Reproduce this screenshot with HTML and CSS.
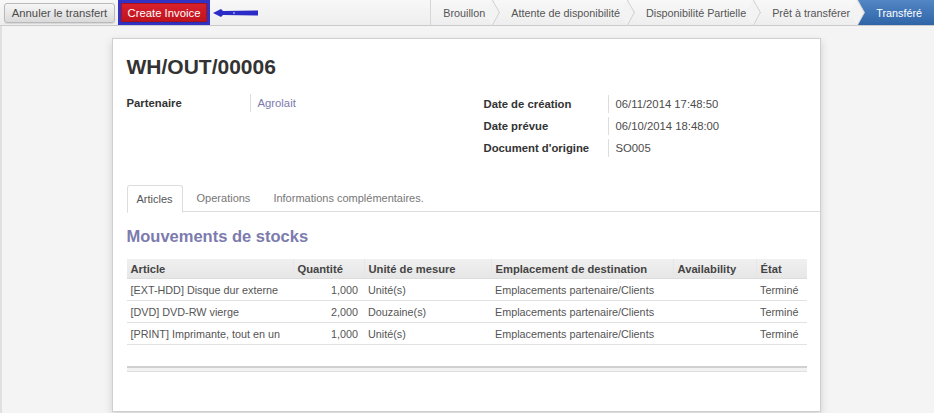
FILE: index.html
```html
<!DOCTYPE html>
<html lang="fr">
<head>
    <meta charset="UTF-8">
    <title>WH/OUT/00006</title>
    <link rel="stylesheet" href="styles.css">
</head>
<body>
    <div class="barre">
        <div class="boutons">
            <button class="btn">Annuler le transfert</button>
            <span class="cadre"><button class="btn rouge">Create Invoice</button></span>
            <svg class="fleche" width="48" height="12" viewBox="0 0 48 12">
                <path d="M1 6 L9 2 L11 4 L46 3.5 L46 8.5 L11 8 L9 10 Z" fill="#2b2bc8"/>
                <circle cx="22" cy="6" r="1" fill="#a0a0ee"/>
            </svg>
        </div>
        <div class="etapes">
            <span class="etape">Brouillon</span>
            <span class="etape">Attente de disponibilité</span>
            <span class="etape">Disponibilité Partielle</span>
            <span class="etape">Prêt à transférer</span>
            <span class="etape active">Transféré</span>
        </div>
    </div>

    <div class="fond">
        <div class="feuille">
            <h1 class="titre">WH/OUT/00006</h1>
            <div class="groupes">
                <div class="groupe gauche">
                    <div class="champ"><span class="libelle">Partenaire</span><span class="valeur lien">Agrolait</span></div>
                </div>
                <div class="groupe droite">
                    <div class="champ"><span class="libelle">Date de création</span><span class="valeur">06/11/2014 17:48:50</span></div>
                    <div class="champ"><span class="libelle">Date prévue</span><span class="valeur">06/10/2014 18:48:00</span></div>
                    <div class="champ"><span class="libelle">Document d'origine</span><span class="valeur">SO005</span></div>
                </div>
            </div>

            <div class="onglets">
                <span class="onglet actif">Articles</span>
                <span class="onglet">Operations</span>
                <span class="onglet">Informations complémentaires.</span>
            </div>

            <h2 class="sous-titre">Mouvements de stocks</h2>

            <table class="liste">
                <thead>
                    <tr>
                        <th class="c1">Article</th>
                        <th class="c2">Quantité</th>
                        <th class="c3">Unité de mesure</th>
                        <th class="c4">Emplacement de destination</th>
                        <th class="c5">Availability</th>
                        <th class="c6">État</th>
                    </tr>
                </thead>
                <tbody>
                    <tr>
                        <td>[EXT-HDD] Disque dur externe</td>
                        <td class="num">1,000</td>
                        <td>Unité(s)</td>
                        <td>Emplacements partenaire/Clients</td>
                        <td></td>
                        <td>Terminé</td>
                    </tr>
                    <tr>
                        <td>[DVD] DVD-RW vierge</td>
                        <td class="num">2,000</td>
                        <td>Douzaine(s)</td>
                        <td>Emplacements partenaire/Clients</td>
                        <td></td>
                        <td>Terminé</td>
                    </tr>
                    <tr>
                        <td>[PRINT] Imprimante, tout en un</td>
                        <td class="num">1,000</td>
                        <td>Unité(s)</td>
                        <td>Emplacements partenaire/Clients</td>
                        <td></td>
                        <td>Terminé</td>
                    </tr>
                </tbody>
            </table>
            <div class="pied"></div>
        </div>
    </div>
</body>
</html>
```

FILE: styles.css
```css
body {
    margin: 0;
    font-family: "Liberation Sans", Arial, sans-serif;
    font-size: 11px;
    color: #4c4c4c;
    background-color: #f4f4f4;
    height: 413px;
    overflow: hidden;
}

.barre {
    display: flex;
    justify-content: space-between;
    align-items: stretch;
    height: 25px;
    background: linear-gradient(#f8f8f8, #eeeeee);
    border-bottom: 1px solid #cacaca;
}

.boutons {
    display: flex;
    align-items: center;
    padding-left: 4px;
}

.btn {
    font-family: "Liberation Sans", Arial, sans-serif;
    font-size: 11.3px;
    height: 20px;
    width: 111px;
    padding: 0;
    color: #4c4c4c;
    border: 1px solid #b9b9b9;
    border-radius: 3px;
    background: linear-gradient(#f6f6f6, #dadada);
    box-shadow: 0 1px 1px rgba(0, 0, 0, 0.1);
}

.cadre {
    display: flex;
    align-items: center;
    height: 25px;
    margin-left: 3px;
    padding: 0 3px;
    background-color: #3232c4;
    box-sizing: border-box;
}

.rouge {
    height: 19px;
    width: 86px;
    color: #fff;
    border: 1px solid #a8121c;
    border-radius: 1px;
    background: linear-gradient(#d8202b, #c0141e);
}

.fleche {
    margin-left: 2px;
}

.etapes {
    display: flex;
    align-items: stretch;
    font-size: 10.8px;
}

.etape {
    position: relative;
    display: flex;
    align-items: center;
    padding: 0 7px 0 19px;
    color: #555;
}

.etape::after {
    content: '';
    position: absolute;
    z-index: 1;
    top: 3.1px;
    right: -9.35px;
    width: 18.7px;
    height: 18.7px;
    box-sizing: border-box;
    background-color: #f3f3f3;
    border-top: 1px solid #c8c8c8;
    border-right: 1px solid #c8c8c8;
    transform: scaleX(0.55) rotate(45deg);
}

.etape:first-child {
    padding-left: 12px;
    border-left: 1px solid #d6d6d6;
}

.etape.active {
    color: #fff;
    padding: 0 12px 0 19px;
    background: linear-gradient(#5286c4, #2f65a8);
}

.etape.active::after {
    display: none;
}

.fond {
    display: flex;
    justify-content: center;
    padding: 12px 0 0 0;
    border-left: 2px solid #e0e0e0;
    height: 400px;
    box-sizing: border-box;
}

.feuille {
    width: 709px;
    height: 374px;
    padding: 5px 14px 0 14px;
    box-sizing: border-box;
    background-color: #fff;
    border: 1px solid #cfcfcf;
    box-shadow: 0 3px 8px rgba(0, 0, 0, 0.15);
    margin-left: -4px;
}

.titre {
    margin: 8px 0 0 0;
    font-size: 21px;
    color: #333;
    line-height: 30px;
}

.groupes {
    display: flex;
    margin-top: 12px;
    font-size: 11.3px;
}

.groupe {
    display: flex;
    flex-direction: column;
    gap: 4px;
}

.gauche {
    width: 357px;
}

.droite {
    margin-top: 1px;
}

.champ {
    display: flex;
    line-height: 18px;
}

.libelle {
    font-weight: bold;
    color: #333;
}

.gauche .libelle {
    width: 123px;
}

.droite .libelle {
    width: 124px;
}

.valeur {
    padding-left: 7px;
    border-left: 1px solid #ddd;
}

.lien {
    color: #7c7bad;
}

.onglets {
    display: flex;
    margin-top: 28px;
    border-bottom: 1px solid #ddd;
    margin-right: -14px;
    height: 26px;
}

.onglet {
    padding: 0 9px;
    line-height: 26px;
    color: #777;
    margin-right: 5px;
}

.onglet.actif {
    color: #555;
    background-color: #fff;
    border: 1px solid #ddd;
    border-bottom-color: #fff;
    border-radius: 3px 3px 0 0;
    height: 26px;
}

.sous-titre {
    margin: 13px 0 0 0;
    font-size: 16.5px;
    line-height: 22px;
    color: #7c7bad;
}

.liste {
    width: 680px;
    margin-top: 12px;
    border-collapse: collapse;
    white-space: nowrap;
}

.liste th {
    text-align: left;
    font-weight: bold;
    font-size: 11.2px;
    color: #444;
    height: 19px;
    padding: 0 4px;
    background: linear-gradient(#f0f0f0, #e6e6e6);
    border-left: 1px solid #e6e6e6;
    border-bottom: 1px solid #ddd;
}

.liste th.c1 { width: 158px; border-left: none; }
.liste th.c2 { width: 62px; }
.liste th.c3 { width: 118px; }
.liste th.c4 { width: 173px; }
.liste th.c5 { width: 74px; }

.liste td {
    height: 21px;
    padding: 0 4px;
    color: #555;
    font-size: 10.8px;
    border-bottom: 1px solid #e2e2e2;
}

.liste td.num {
    text-align: right;
    padding-right: 6px;
}

.pied {
    width: 680px;
    height: 3px;
    margin-top: 21px;
    border-top: 2px solid #d0d0d0;
    border-bottom: 1px solid #e0e0e0;
    background-color: #f2f2f2;
}
```
